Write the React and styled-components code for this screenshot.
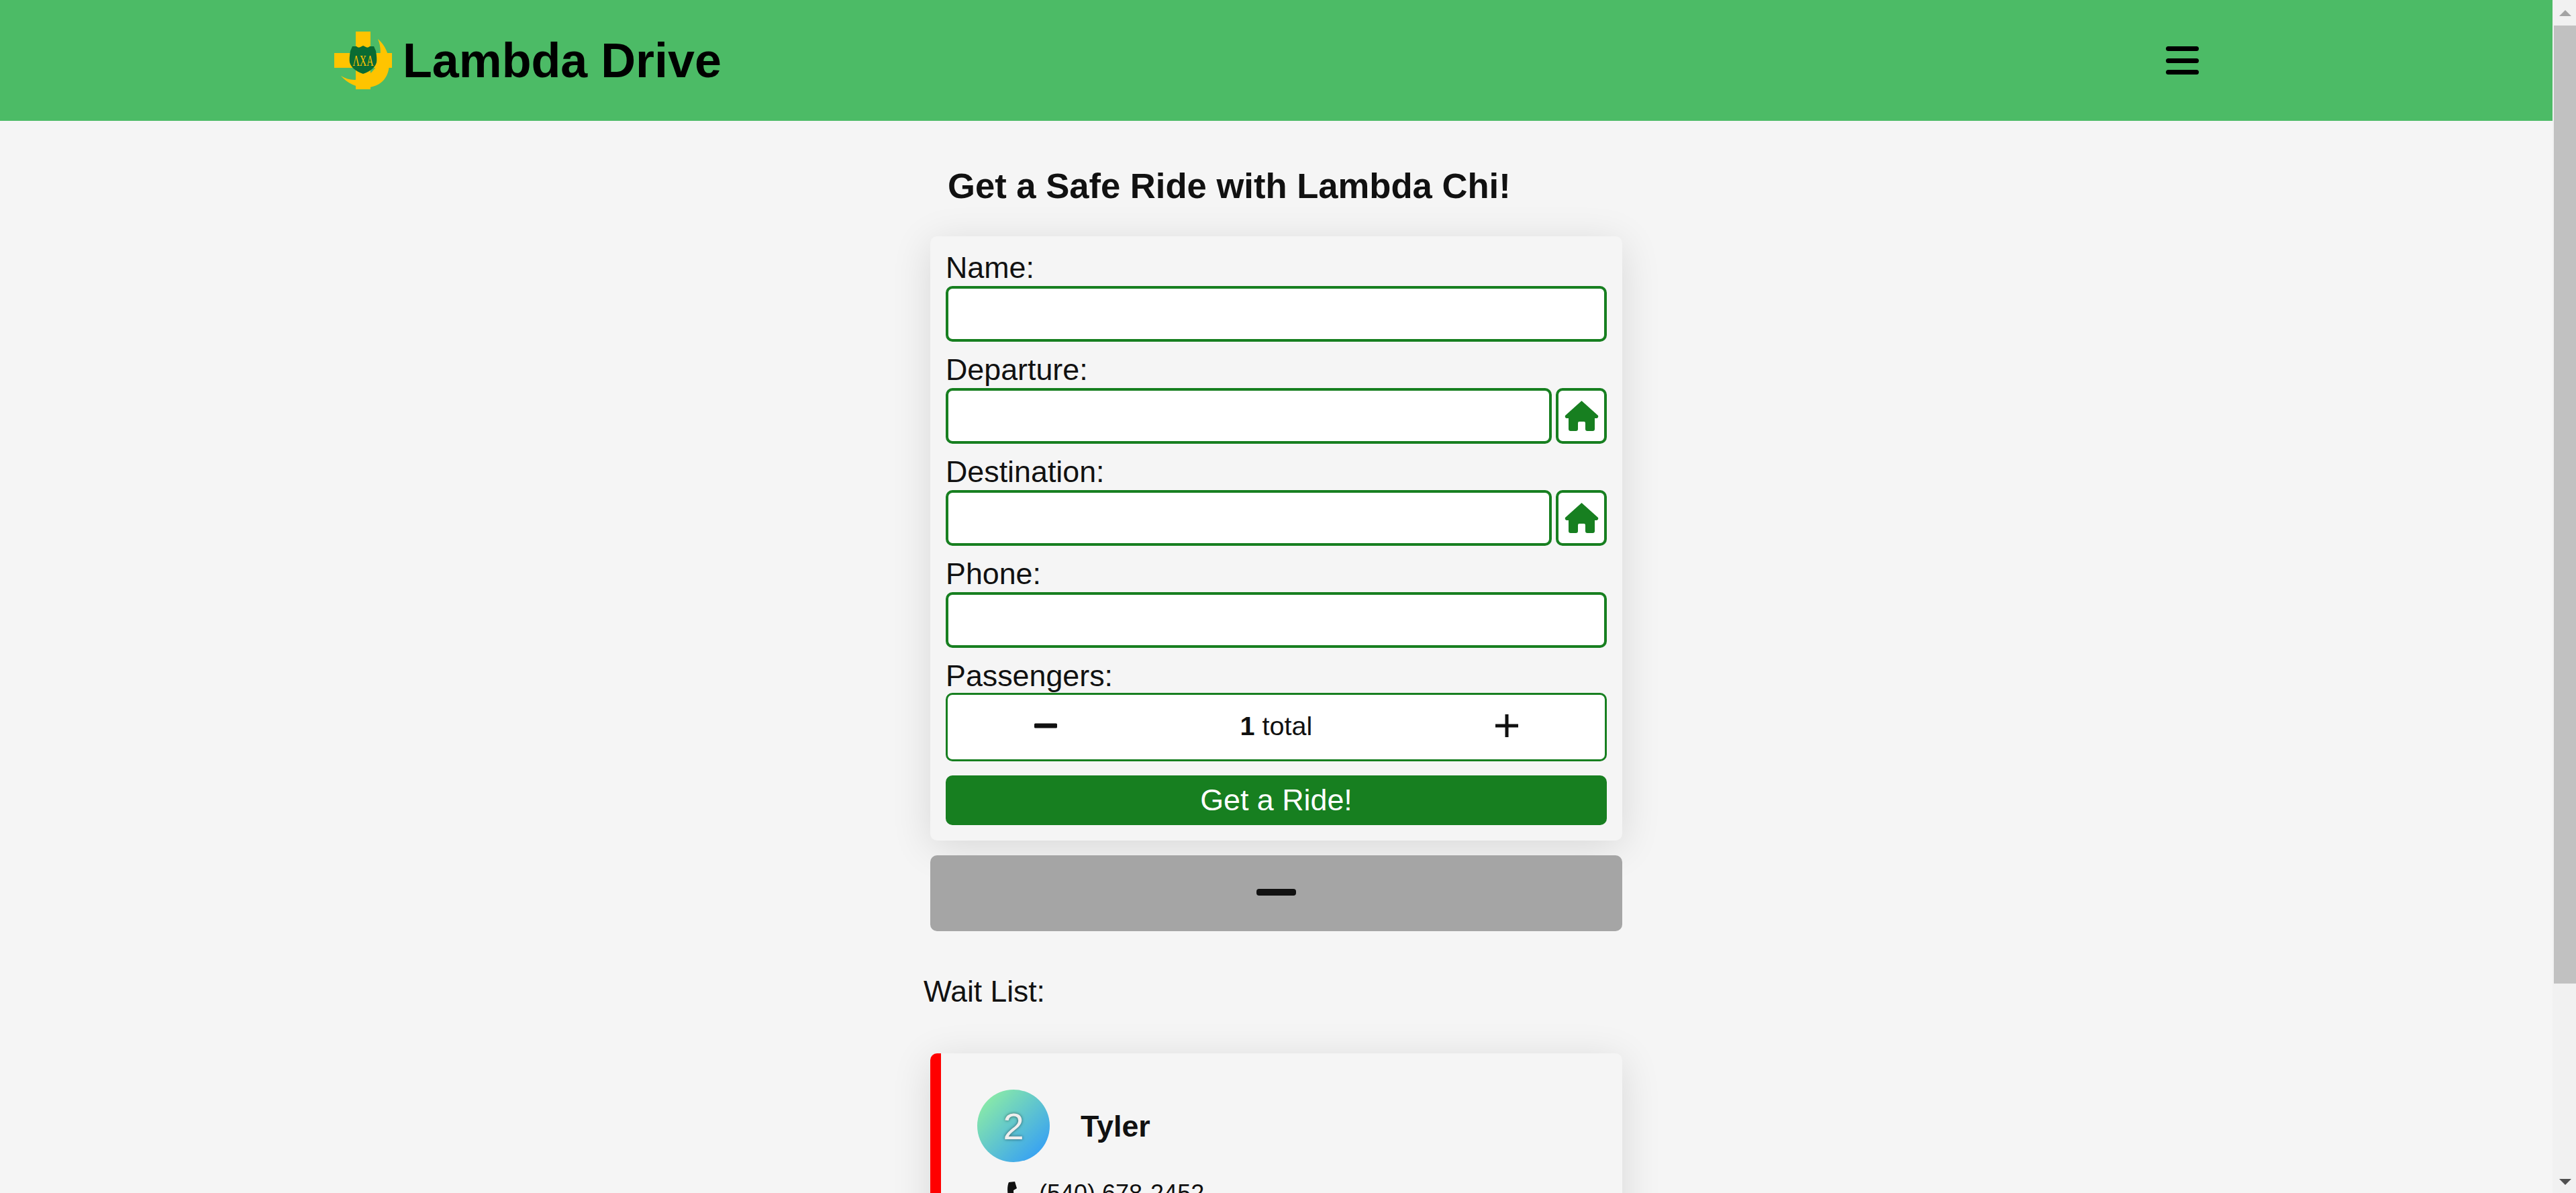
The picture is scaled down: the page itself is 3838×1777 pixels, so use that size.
import React from "react";
import styled, { createGlobalStyle } from "styled-components";

const GREEN = "#177f20";

const Global = createGlobalStyle`
  body {
    margin: 0;
    background: #f5f5f5;
    color: #111;
    font-family: "Liberation Sans", Arial, sans-serif;
  }
`;

const Layout = styled.div`
  display: flex;
  align-items: flex-start;
`;

const Page = styled.div`
  flex: 1;
  min-width: 0;
`;

const ScrollRail = styled.div`
  position: sticky;
  top: 0;
  flex: none;
  width: 35px;
  height: 100vh;
  display: flex;
  flex-direction: column;
  background: #f1f1f1;
`;

const ScrollCap = styled.div`
  flex: none;
  height: 38px;
  display: flex;
  align-items: center;
  justify-content: center;
  padding: ${(p) => (p.$down ? "4px 0 0 2px" : "0 0 0 2px")};
  box-sizing: border-box;
`;

const UpArrow = styled.span`
  border-left: 9px solid transparent;
  border-right: 9px solid transparent;
  border-bottom: 9px solid #a3a3a3;
`;

const DownArrow = styled.span`
  border-left: 9px solid transparent;
  border-right: 9px solid transparent;
  border-top: 9px solid #505050;
`;

const ScrollTrack = styled.div`
  flex: 1;
`;

const ScrollThumb = styled.div`
  height: 1427px;
  margin-left: 2px;
  background: #c1c1c1;
`;

const Nav = styled.header`
  height: 180px;
  background: #4cbb66;
  display: flex;
  align-items: center;
  justify-content: space-between;
  padding: 0 527px 0 498px;
`;

const Brand = styled.div`
  display: flex;
  align-items: center;
  gap: 16px;
`;

const BrandName = styled.span`
  font-size: 71.8px;
  font-weight: 700;
  color: #000;
`;

const Burger = styled.button`
  display: flex;
  flex-direction: column;
  gap: 10.3px;
  width: 49px;
  padding: 0;
  border: 0;
  background: none;
`;

const BurgerLine = styled.span`
  height: 7px;
  border-radius: 4px;
  background: #000;
`;

const Main = styled.main`
  width: 1051px;
  margin: 0 auto;
  padding-bottom: 60px;
`;

const Title = styled.h1`
  margin: 0;
  padding: 67px 0 0 36px;
  height: 105px;
  font-size: 52.6px;
  font-weight: 700;
  line-height: 60px;
`;

const FormCard = styled.form`
  margin: 0 10px;
  padding: 24px 23px 23px;
  border-radius: 10px;
  background: #f5f5f5;
  box-shadow: 0 10px 60px rgba(0, 0, 0, 0.12);
`;

const Field = styled.div`
  margin-bottom: 19px;
`;

const Label = styled.label`
  display: block;
  height: 50px;
  font-size: 44.8px;
  line-height: 45px;
`;

const InputRow = styled.div`
  display: flex;
  gap: 6px;
`;

const Input = styled.input`
  flex: 1;
  min-width: 0;
  box-sizing: border-box;
  height: 83px;
  border: 4px solid ${GREEN};
  border-radius: 10px;
  background: #fff;
`;

const HomeButton = styled.button`
  box-sizing: border-box;
  width: 76px;
  height: 83px;
  padding: 0;
  display: flex;
  align-items: center;
  justify-content: center;
  border: 4px solid ${GREEN};
  border-radius: 10px;
  background: #fff;
`;

const Stepper = styled.div`
  box-sizing: border-box;
  height: 102px;
  margin-top: -2px;
  padding: 0 129px 4px;
  display: flex;
  align-items: center;
  justify-content: space-between;
  border: 3px solid ${GREEN};
  border-radius: 10px;
  background: #fff;
  font-size: 39.6px;
`;

const StepIcon = styled.svg`
  width: 34px;
  height: 34px;
`;

const Count = styled.span`
  b {
    font-weight: 700;
  }
`;

const Submit = styled.button`
  display: block;
  width: 100%;
  height: 74px;
  margin-top: 21px;
  padding: 0 0 2px;
  border: 0;
  border-radius: 10px;
  background: ${GREEN};
  color: #fff;
  font-family: inherit;
  font-size: 44.8px;
`;

const Collapse = styled.button`
  display: flex;
  width: 1031px;
  height: 113px;
  margin: 22px 10px 0;
  padding: 0;
  align-items: center;
  justify-content: center;
  border: 0;
  border-radius: 10px;
  background: #a5a5a5;
`;

const CollapseDash = styled.span`
  width: 59px;
  height: 10px;
  margin-bottom: 3px;
  border-radius: 4px;
  background: #111;
`;

const SectionLabel = styled.h2`
  margin: 0;
  padding-top: 65px;
  height: 117px;
  font-size: 44.4px;
  font-weight: 400;
  line-height: 50px;
`;

const RideCard = styled.article`
  margin: 0 10px;
  min-height: 420px;
  padding: 54px 0 0 54px;
  border-left: 16px solid #f00;
  border-radius: 10px;
  background: #f5f5f5;
  box-shadow: 0 10px 60px rgba(0, 0, 0, 0.12);
`;

const RideHead = styled.div`
  display: flex;
  align-items: center;
  gap: 46px;
`;

const Badge = styled.div`
  width: 108px;
  height: 108px;
  display: flex;
  align-items: center;
  justify-content: center;
  border-radius: 50%;
  background: linear-gradient(135deg, #96f59c, #2a96ff);
  color: #eee;
  font-size: 56px;
  text-shadow: 0 0 4px rgba(0, 0, 0, 0.55);
`;

const RideName = styled.span`
  font-size: 44.8px;
  font-weight: 700;
`;

const ContactRow = styled.div`
  display: flex;
  align-items: center;
  gap: 28px;
  margin: 26px 0 0 44px;
  font-size: 36px;
`;

function HomeIcon() {
  return (
    <svg width="51" height="46" viewBox="0 0 51 46">
      <path
        fill={GREEN}
        d="M25.5 0 L50 22 Q51 25 48 26 L45 26 L45 42 Q45 45 42 45 L34 45 Q31 45 31 42 L31 33 Q31 31 29 31 L22 31 Q20 31 20 33 L20 42 Q20 45 17 45 L9 45 Q6 45 6 42 L6 26 L3 26 Q0 25 1 22 Z"
      />
    </svg>
  );
}

function Logo() {
  return (
    <svg width="86" height="86" viewBox="0 0 86 86">
      <path
        fill="#ffc400"
        d="M65 11 C84 27 88 58 72 74 C55 90 25 84 10 66 C24 75 42 74 54 62 C68 50 73 30 65 11 Z"
      />
      <rect x="32" y="0" width="22" height="86" fill="#ffc400" />
      <rect x="0" y="32" width="86" height="22" fill="#ffc400" />
      <path
        fill="#0a6b33"
        d="M27 22 L33 22 Q36 25 39 23 L43 21 L47 23 Q50 25 53 22 L59 22 L62 29 Q64 40 63 46 Q60 57 43 63 Q26 57 23 46 Q22 40 24 29 Z"
      />
      <text
        x="43"
        y="51"
        textAnchor="middle"
        fill="#ffc400"
        fontFamily="Liberation Serif, serif"
        fontSize="23"
        textLength="31"
        lengthAdjust="spacingAndGlyphs"
      >
        ΛΧΑ
      </text>
    </svg>
  );
}

function PhoneIcon() {
  return (
    <svg width="20" height="36" viewBox="0 0 20 36">
      <path
        fill="#111"
        d="M3 1 L12 0 L15 10 L10 13 Q10 20 12 24 L19 25 L18 34 L11 36 C1 30 -1 10 3 1 Z"
      />
    </svg>
  );
}

export default function App() {
  return (
    <Layout>
      <Global />
      <Page>
        <Nav>
          <Brand>
            <Logo />
            <BrandName>Lambda Drive</BrandName>
          </Brand>
          <Burger aria-label="menu">
            <BurgerLine />
            <BurgerLine />
            <BurgerLine />
          </Burger>
        </Nav>
        <Main>
          <Title>Get a Safe Ride with Lambda Chi!</Title>
          <FormCard>
            <Field>
              <Label>Name:</Label>
              <InputRow>
                <Input />
              </InputRow>
            </Field>
            <Field>
              <Label>Departure:</Label>
              <InputRow>
                <Input />
                <HomeButton type="button">
                  <HomeIcon />
                </HomeButton>
              </InputRow>
            </Field>
            <Field>
              <Label>Destination:</Label>
              <InputRow>
                <Input />
                <HomeButton type="button">
                  <HomeIcon />
                </HomeButton>
              </InputRow>
            </Field>
            <Field>
              <Label>Phone:</Label>
              <InputRow>
                <Input />
              </InputRow>
            </Field>
            <Label>Passengers:</Label>
            <Stepper>
              <StepIcon viewBox="0 0 34 34">
                <rect x="0" y="13.5" width="34" height="7" rx="1.5" fill="#111" />
              </StepIcon>
              <Count>
                <b>1</b> total
              </Count>
              <StepIcon viewBox="0 0 34 34">
                <path d="M0 17 H34 M17 0 V34" stroke="#111" strokeWidth="5" />
              </StepIcon>
            </Stepper>
            <Submit type="button">Get a Ride!</Submit>
          </FormCard>
          <Collapse type="button">
            <CollapseDash />
          </Collapse>
          <SectionLabel>Wait List:</SectionLabel>
          <RideCard>
            <RideHead>
              <Badge>2</Badge>
              <RideName>Tyler</RideName>
            </RideHead>
            <ContactRow>
              <PhoneIcon />
              (540) 678-2452
            </ContactRow>
          </RideCard>
        </Main>
      </Page>
      <ScrollRail>
        <ScrollCap>
          <UpArrow />
        </ScrollCap>
        <ScrollTrack>
          <ScrollThumb />
        </ScrollTrack>
        <ScrollCap $down>
          <DownArrow />
        </ScrollCap>
      </ScrollRail>
    </Layout>
  );
}
